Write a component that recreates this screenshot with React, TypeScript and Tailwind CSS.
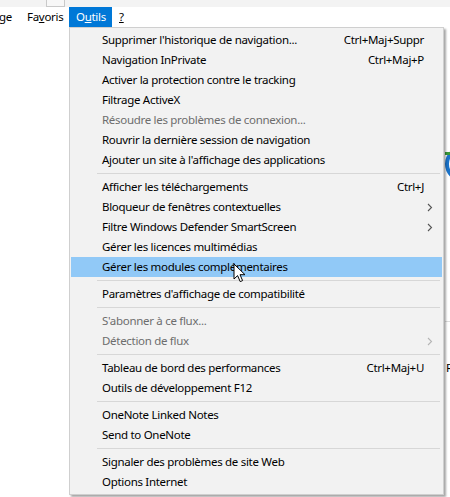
import React from 'react';

type Item =
  | { sep: true }
  | { sep?: false; label: string; shortcut?: string; arrow?: boolean; disabled?: boolean; active?: boolean };

const ITEMS: Item[] = [
  { label: "Supprimer l'historique de navigation...", shortcut: 'Ctrl+Maj+Suppr' },
  { label: 'Navigation InPrivate', shortcut: 'Ctrl+Maj+P' },
  { label: 'Activer la protection contre le tracking' },
  { label: 'Filtrage ActiveX' },
  { label: 'Résoudre les problèmes de connexion...', disabled: true },
  { label: 'Rouvrir la dernière session de navigation' },
  { label: "Ajouter un site à l'affichage des applications" },
  { sep: true },
  { label: 'Afficher les téléchargements', shortcut: 'Ctrl+J' },
  { label: 'Bloqueur de fenêtres contextuelles', arrow: true },
  { label: 'Filtre Windows Defender SmartScreen', arrow: true },
  { label: 'Gérer les licences multimédias' },
  { label: 'Gérer les modules complémentaires', active: true },
  { sep: true },
  { label: "Paramètres d'affichage de compatibilité" },
  { sep: true },
  { label: "S'abonner à ce flux...", disabled: true },
  { label: 'Détection de flux', disabled: true, arrow: true },
  { sep: true },
  { label: 'Tableau de bord des performances', shortcut: 'Ctrl+Maj+U' },
  { label: 'Outils de développement F12' },
  { sep: true },
  { label: 'OneNote Linked Notes' },
  { label: 'Send to OneNote' },
  { sep: true },
  { label: 'Signaler des problèmes de site Web' },
  { label: 'Options Internet' },
];

function Chevron({ dim }: { dim?: boolean }) {
  return (
    <svg width="6" height="9" viewBox="0 0 6 9" className="shrink-0">
      <path d="M1 1l3.5 3.5L1 8" fill="none" stroke={dim ? '#b5b5b5' : '#555'} strokeWidth="1.1" />
    </svg>
  );
}

function Cursor() {
  return (
    <svg width="13" height="20" viewBox="0 0 13 20" className="absolute left-[233px] top-[263px]">
      <path
        d="M1 1v15l3.6-3.4 2.6 6 2.4-1-2.6-5.9H12z"
        fill="#fff"
        stroke="#000"
        strokeWidth="1"
        strokeLinejoin="round"
      />
    </svg>
  );
}

export default function App() {
  return (
    <div className="relative h-[497px] w-[450px] overflow-hidden bg-white font-['Noto_Sans',sans-serif] text-[11.5px] tracking-[-0.3px] text-black">
      {/* top strip */}
      <div className="flex h-[7px] bg-[#f3f3f3]">
        <div className="ml-[46px] h-[7px] w-[19px] border-x border-b border-[#c9c9c9] bg-[#f7f7f7]" />
      </div>

      {/* menu bar */}
      <div className="flex h-[20px] items-center bg-white leading-[20px]">
        <span className="-ml-[1px] w-[28px]">ge</span>
        <span className="w-[42px]">
          Fa<span className="underline">v</span>oris
        </span>
        <span className="w-[43px] bg-[#0078d7] pl-[7px] text-white">
          O<span className="underline">u</span>tils
        </span>
        <span className="ml-[7px] underline">?</span>
      </div>

      {/* background bits peeking out */}
      <div className="absolute left-[445px] top-[146px] h-[36px] w-[36px] rounded-full border-[4px] border-[#1a73c9]" />
      <div className="absolute left-[445px] top-[152px] h-[3px] w-[5px] bg-[#3a9a3a]" />
      <div className="absolute left-[446px] top-[360px] leading-[16px]">Re</div>
      <div className="absolute left-[445px] top-[321px] h-px w-[5px] bg-[#ddd]" />

      {/* dropdown */}
      <div className="absolute left-[69px] top-[27px] w-[375px] border border-[#cfcfcf] bg-[#f2f2f2] py-[2px] shadow-[2px_2px_2px_rgba(0,0,0,0.35)]">
        {ITEMS.map((it, i) =>
          it.sep ? (
            <div key={i} className="flex h-[7px] items-center pl-[27px] pr-[3px]">
              <div className="h-px flex-1 bg-[#d7d7d7]" />
            </div>
          ) : (
            <div
              key={i}
              className={`mx-[1px] flex h-[20px] items-center pl-[31px] pr-[9px] leading-[20px] ${
                it.active ? 'bg-[#91c9f7]' : ''
              } ${it.disabled ? 'text-[#6d6d6d]' : ''}`}
            >
              <span className="flex-1 whitespace-nowrap">{it.label}</span>
              {it.shortcut && <span className="mr-[9px] whitespace-nowrap">{it.shortcut}</span>}
              {it.arrow && <Chevron dim={it.disabled} />}
            </div>
          )
        )}
      </div>

      <Cursor />
    </div>
  );
}
